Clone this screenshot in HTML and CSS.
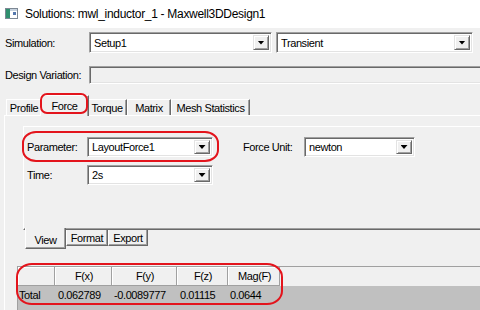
FILE: index.html
```html
<!DOCTYPE html>
<html lang="en">
<head>
    <meta charset="UTF-8">
    <title>Solutions: mwl_inductor_1 - Maxwell3DDesign1</title>
    <link rel="stylesheet" href="styles.css">
</head>
<body>
    <div class="window">
        <!-- 标题栏 -->
        <div class="titlebar">
            <svg class="app-icon" width="13" height="11" viewBox="0 0 13 11">
                <rect x="0.5" y="0.5" width="12" height="10" fill="#ffffff" stroke="#7d8894"/>
                <rect x="1" y="1" width="4" height="9" fill="#2f8f6e"/>
                <rect x="5" y="1" width="7" height="2" fill="#c6d2de"/>
                <rect x="8" y="4" width="3" height="3" fill="#5578ad"/>
            </svg>
            <span class="title">Solutions: mwl_inductor_1 - Maxwell3DDesign1</span>
        </div>

        <div class="form-row row-sim">
            <span class="lbl lbl-main">Simulation:</span>
            <div class="combo combo-setup"><span class="combo-text">Setup1</span><span class="combo-btn"></span></div>
            <div class="combo combo-type"><span class="combo-text">Transient</span><span class="combo-btn"></span></div>
        </div>

        <div class="form-row row-var">
            <span class="lbl lbl-main">Design Variation:</span>
            <div class="field"></div>
        </div>

        <!-- 选项卡 -->
        <div class="tabs">
            <div class="tab tab-profile">Profile</div>
            <div class="tab tab-force active">Force</div>
            <div class="tab tab-torque">Torque</div>
            <div class="tab tab-matrix">Matrix</div>
            <div class="tab tab-mesh">Mesh Statistics</div>
        </div>

        <div class="tab-panel">
            <div class="sub-panel">
                <div class="form-row row-param">
                    <span class="lbl lbl-sub">Parameter:</span>
                    <div class="combo combo-param"><span class="combo-text">LayoutForce1</span><span class="combo-btn"></span></div>
                    <span class="lbl lbl-unit">Force Unit:</span>
                    <div class="combo combo-unit"><span class="combo-text">newton</span><span class="combo-btn"></span></div>
                </div>
                <div class="form-row row-time">
                    <span class="lbl lbl-sub">Time:</span>
                    <div class="combo combo-param"><span class="combo-text">2s</span><span class="combo-btn"></span></div>
                </div>
            </div>

            <div class="sub-tabs">
                <div class="sub-tab tab-view active">View</div>
                <div class="sub-tab tab-format">Format</div>
                <div class="sub-tab tab-export">Export</div>
            </div>

            <!-- 结果表格 -->
            <div class="grid">
                <div class="grid-head">
                    <div class="cell c-name"></div>
                    <div class="cell c-fx">F(x)</div>
                    <div class="cell c-fy">F(y)</div>
                    <div class="cell c-fz">F(z)</div>
                    <div class="cell c-mag">Mag(F)</div>
                </div>
                <div class="grid-row">
                    <div class="cell c-name">Total</div>
                    <div class="cell c-fx">0.062789</div>
                    <div class="cell c-fy">-0.0089777</div>
                    <div class="cell c-fz">0.01115</div>
                    <div class="cell c-mag">0.0644</div>
                </div>
            </div>
        </div>

        <!-- 红色标记圈 -->
        <div class="mark mark-tab"></div>
        <div class="mark mark-param"></div>
        <div class="mark mark-grid"></div>
    </div>
</body>
</html>
```

FILE: styles.css
```css
/* 清除默认样式 */
*{
    padding: 0;
    margin: 0;
    box-sizing: border-box;
}

body{
    background-color: #f0f0f0;
    font-family: "Liberation Sans", Arial, sans-serif;
    font-size: 11px;
    letter-spacing: -0.4px;
    color: #000;
}

.window{
    width: 480px;
    height: 310px;
    overflow: hidden;
    position: relative;
    background-color: #f0f0f0;
}

.titlebar{
    height: 28px;
    background-color: #fff;
    display: flex;
    align-items: center;
    padding-left: 5px;
}

.app-icon{
    margin-right: 7px;
    margin-top: -1px;
}

.title{
    font-size: 12px;
    letter-spacing: -0.3px;
    color: #000;
}

.form-row{
    display: flex;
    align-items: center;
}

.row-sim{
    margin-top: 4px;
    padding-left: 5px;
}

.row-var{
    margin-top: 13px;
    padding-left: 5px;
}

.lbl-main{
    width: 84px;
}

/* 下拉框 */
.combo{
    height: 21px;
    display: flex;
    align-items: stretch;
    padding: 2px;
    background-color: #fff;
    border: 1px solid;
    border-color: #a0a0a0 #fff #fff #a0a0a0;
    box-shadow: inset 1px 1px #696969, inset -1px -1px #e3e3e3;
}

.combo-text{
    flex: 1;
    padding-left: 2px;
    display: flex;
    align-items: center;
}

.combo-btn{
    width: 16px;
    background-color: #f0f0f0;
    border: 1px solid;
    border-color: #e3e3e3 #696969 #696969 #e3e3e3;
    box-shadow: inset 1px 1px #fff, inset -1px -1px #a0a0a0;
    display: flex;
    align-items: center;
    justify-content: center;
}

.combo-btn::after{
    content: "";
    width: 7px;
    height: 4px;
    background-color: #000;
    clip-path: polygon(0 0, 100% 0, 50% 100%);
}

.combo-setup{
    width: 183px;
}

.combo-type{
    width: 197px;
    margin-left: 4px;
}

.field{
    flex: 1;
    height: 18px;
    margin-right: -10px;
    border: 1px solid;
    border-color: #a0a0a0 #fff #fff #a0a0a0;
    box-shadow: inset 1px 1px #696969, inset -1px -1px #e3e3e3;
}

/* 选项卡 */
.tabs{
    display: flex;
    align-items: flex-end;
    height: 20px;
    margin-top: 11px;
    margin-left: 6px;
}

.tab{
    height: 16px;
    display: flex;
    align-items: center;
    justify-content: center;
    border: 1px solid;
    border-bottom: none;
    border-color: #fff #696969 #fff #fff;
    box-shadow: inset -1px 0 #a0a0a0;
    background-color: #f0f0f0;
}

.tab-profile{ width: 36px; }
.tab-force{ width: 45px; }
.tab-torque{ width: 40px; }
.tab-matrix{ width: 44px; }
.tab-mesh{ width: 79px; }

.tab.active{
    width: 49px;
    height: 21px;
    margin: 0 -2px -1px -2px;
    padding-bottom: 1px;
    position: relative;
    z-index: 1;
}

.tab-panel{
    margin-left: 4px;
    margin-right: -10px;
    height: 200px;
    border-left: 1px solid #fff;
    border-top: 1px solid #fff;
}

.sub-panel{
    height: 104px;
    margin-top: 10px;
    margin-left: 18px;
    padding: 10px 0 0 3px;
    border-left: 1px solid #fff;
    border-top: 1px solid #fff;
    border-bottom: 1px solid #696969;
    box-shadow: inset 0 -1px #a0a0a0;
}

.row-param .combo,
.row-time .combo{
    height: 20px;
}

.lbl-sub{
    width: 60px;
}

.combo-param{
    width: 126px;
}

.lbl-unit{
    width: 61px;
    margin-left: 30px;
}

.combo-unit{
    width: 111px;
}

.row-time{
    margin-top: 8px;
}

/* 下方的小选项卡 */
.sub-tabs{
    display: flex;
    align-items: flex-start;
    margin-left: 20px;
}

.sub-tab{
    height: 16px;
    display: flex;
    align-items: center;
    justify-content: center;
    border: 1px solid;
    border-top: none;
    border-color: #fff #696969 #696969 #fff;
    box-shadow: inset -1px -1px #a0a0a0;
    background-color: #f0f0f0;
}

.sub-tab.active{
    width: 41px;
    height: 21px;
    margin-top: -2px;
    padding-top: 3px;
    position: relative;
}

.tab-format{ width: 42px; }
.tab-export{ width: 40px; }

/* 表格 */
.grid{
    margin-top: 17px;
    margin-left: 12px;
    height: 60px;
    background-color: #c0c0c0;
    border-top: 1px solid #a0a0a0;
    border-left: 1px solid #a0a0a0;
}

.grid-head{
    display: flex;
    height: 19px;
    background-color: #f0f0f0;
}

.grid-head .cell{
    justify-content: center;
    border-right: 1px solid #a0a0a0;
    border-bottom: 1px solid #a0a0a0;
    box-shadow: inset 1px 1px #fff;
}

.grid-row{
    display: flex;
    height: 18px;
}

.cell{
    display: flex;
    align-items: center;
    padding-left: 2px;
}

.c-name{ width: 37px; }
.c-fx{ width: 57px; }
.c-fy{ width: 65px; }
.c-fz{ width: 51px; }
.c-mag{ width: 52px; }

.grid-row .c-name{ padding-left: 1px; }
.grid-row .c-fx{ padding-left: 3px; }
.grid-row .c-fz{ padding-left: 3px; }

/* 红色标记圈 */
.mark{
    position: absolute;
    z-index: 5;
    border: 2px solid #e3141c;
    pointer-events: none;
}

.mark-tab{
    left: 40px;
    top: 93px;
    width: 48px;
    height: 21px;
    border-radius: 7px;
}

.mark-param{
    left: 22px;
    top: 131px;
    width: 197px;
    height: 31px;
    border-radius: 14px / 12px;
}

.mark-grid{
    left: 16px;
    top: 263px;
    width: 267px;
    height: 42px;
    border-radius: 16px / 14px;
}
```
